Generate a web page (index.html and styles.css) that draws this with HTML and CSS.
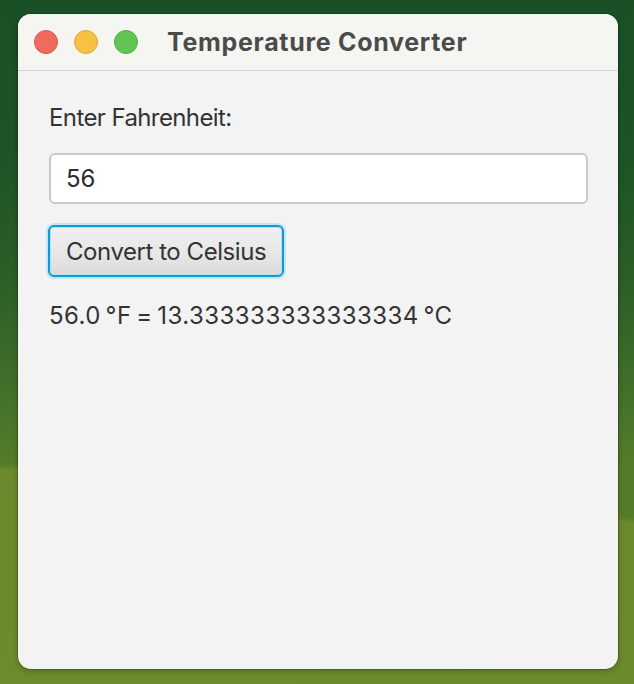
FILE: index.html
```html
<!DOCTYPE html>
<html>
<head>
<meta charset="utf-8">
<link rel="stylesheet" href="styles.css">
</head>
<body>
<div class="desktop">
  <div class="window">
    <div class="titlebar">
      <div class="lights">
        <span class="light red"></span>
        <span class="light yellow"></span>
        <span class="light green"></span>
      </div>
      <div class="title">Temperature Converter</div>
    </div>
    <div class="content">
      <div class="label">Enter Fahrenheit:</div>
      <div class="field">56</div>
      <div class="btn-row"><button class="btn">Convert to Celsius</button></div>
      <div class="result">56.0 °F = 13.333333333333334 °C</div>
    </div>
  </div>
</div>
</body>
</html>
```

FILE: styles.css
```css
html, body {
  margin: 0;
  padding: 0;
}
body {
  width: 634px;
  height: 684px;
  overflow: hidden;
  font-family: Inter, "Open Sans", "Liberation Sans", sans-serif;
}
.desktop {
  width: 634px;
  height: 684px;
  box-sizing: border-box;
  padding: 14px 16px 15px 18px;
  background:
    radial-gradient(ellipse 900px 280px at 100px 740px, #6c8d2d 0%, #6a8a2c 97%, rgba(106,138,44,0) 99%),
    linear-gradient(180deg, #1a5026 0%, #1c5427 22%, #2a5e27 40%, #44712a 58%, #557c2a 68%, #5a7f29 100%);
}
.window {
  width: 600px;
  height: 655px;
  border-radius: 13px;
  overflow: hidden;
  display: flex;
  flex-direction: column;
  background: #f3f3f3;
  box-shadow: 0 0 0 0.5px rgba(0,0,0,0.35), 0 2px 6px rgba(0,0,0,0.25);
}
.titlebar {
  height: 56px;
  flex: none;
  background: #f5f6f2;
  border-bottom: 1px solid #d4d4d4;
  display: flex;
  align-items: center;
}
.lights {
  display: flex;
  gap: 16px;
  margin-left: 16px;
}
.light {
  width: 24px;
  height: 24px;
  border-radius: 50%;
  box-sizing: border-box;
}
.red { background: #ee6b5e; border: 1px solid #d9574b; }
.yellow { background: #f6c244; border: 1px solid #dea534; }
.green { background: #61c553; border: 1px solid #4fae42; }
.title {
  margin-left: 29px;
  font-weight: 700;
  font-size: 25px;
  color: #4b4b4b;
  letter-spacing: 0.7px;
}
.content {
  flex: 1;
  padding: 33px 30px 0 31px;
  color: #333333;
  font-size: 24px;
}
.label {
  line-height: 28px;
  letter-spacing: -0.6px;
}
.field {
  margin-top: 21px;
  height: 51px;
  box-sizing: border-box;
  border: 2px solid #c9c9c9;
  border-radius: 6px;
  background: #ffffff;
  padding-left: 15px;
  display: flex;
  align-items: center;
  font-size: 24px;
  color: #2d2d2d;
}
.btn-row {
  margin-top: 21px;
  display: flex;
}
.btn {
  height: 52px;
  box-sizing: border-box;
  padding: 0 16px;
  border: 2px solid #0c9bd6;
  border-radius: 6px;
  background: linear-gradient(180deg, #f0f0f0 0%, #e6e6e6 60%, #dadada 100%);
  box-shadow: 0 0 0 2px rgba(120,200,235,0.35), inset 0 0 0 1px #b8dff0;
  font-family: inherit;
  font-size: 24px;
  color: #333333;
  letter-spacing: -0.45px;
  margin-left: -1px;
}
.result {
  margin-top: 25px;
  line-height: 28px;
  letter-spacing: 0.45px;
  word-spacing: -2.5px;
}
```
